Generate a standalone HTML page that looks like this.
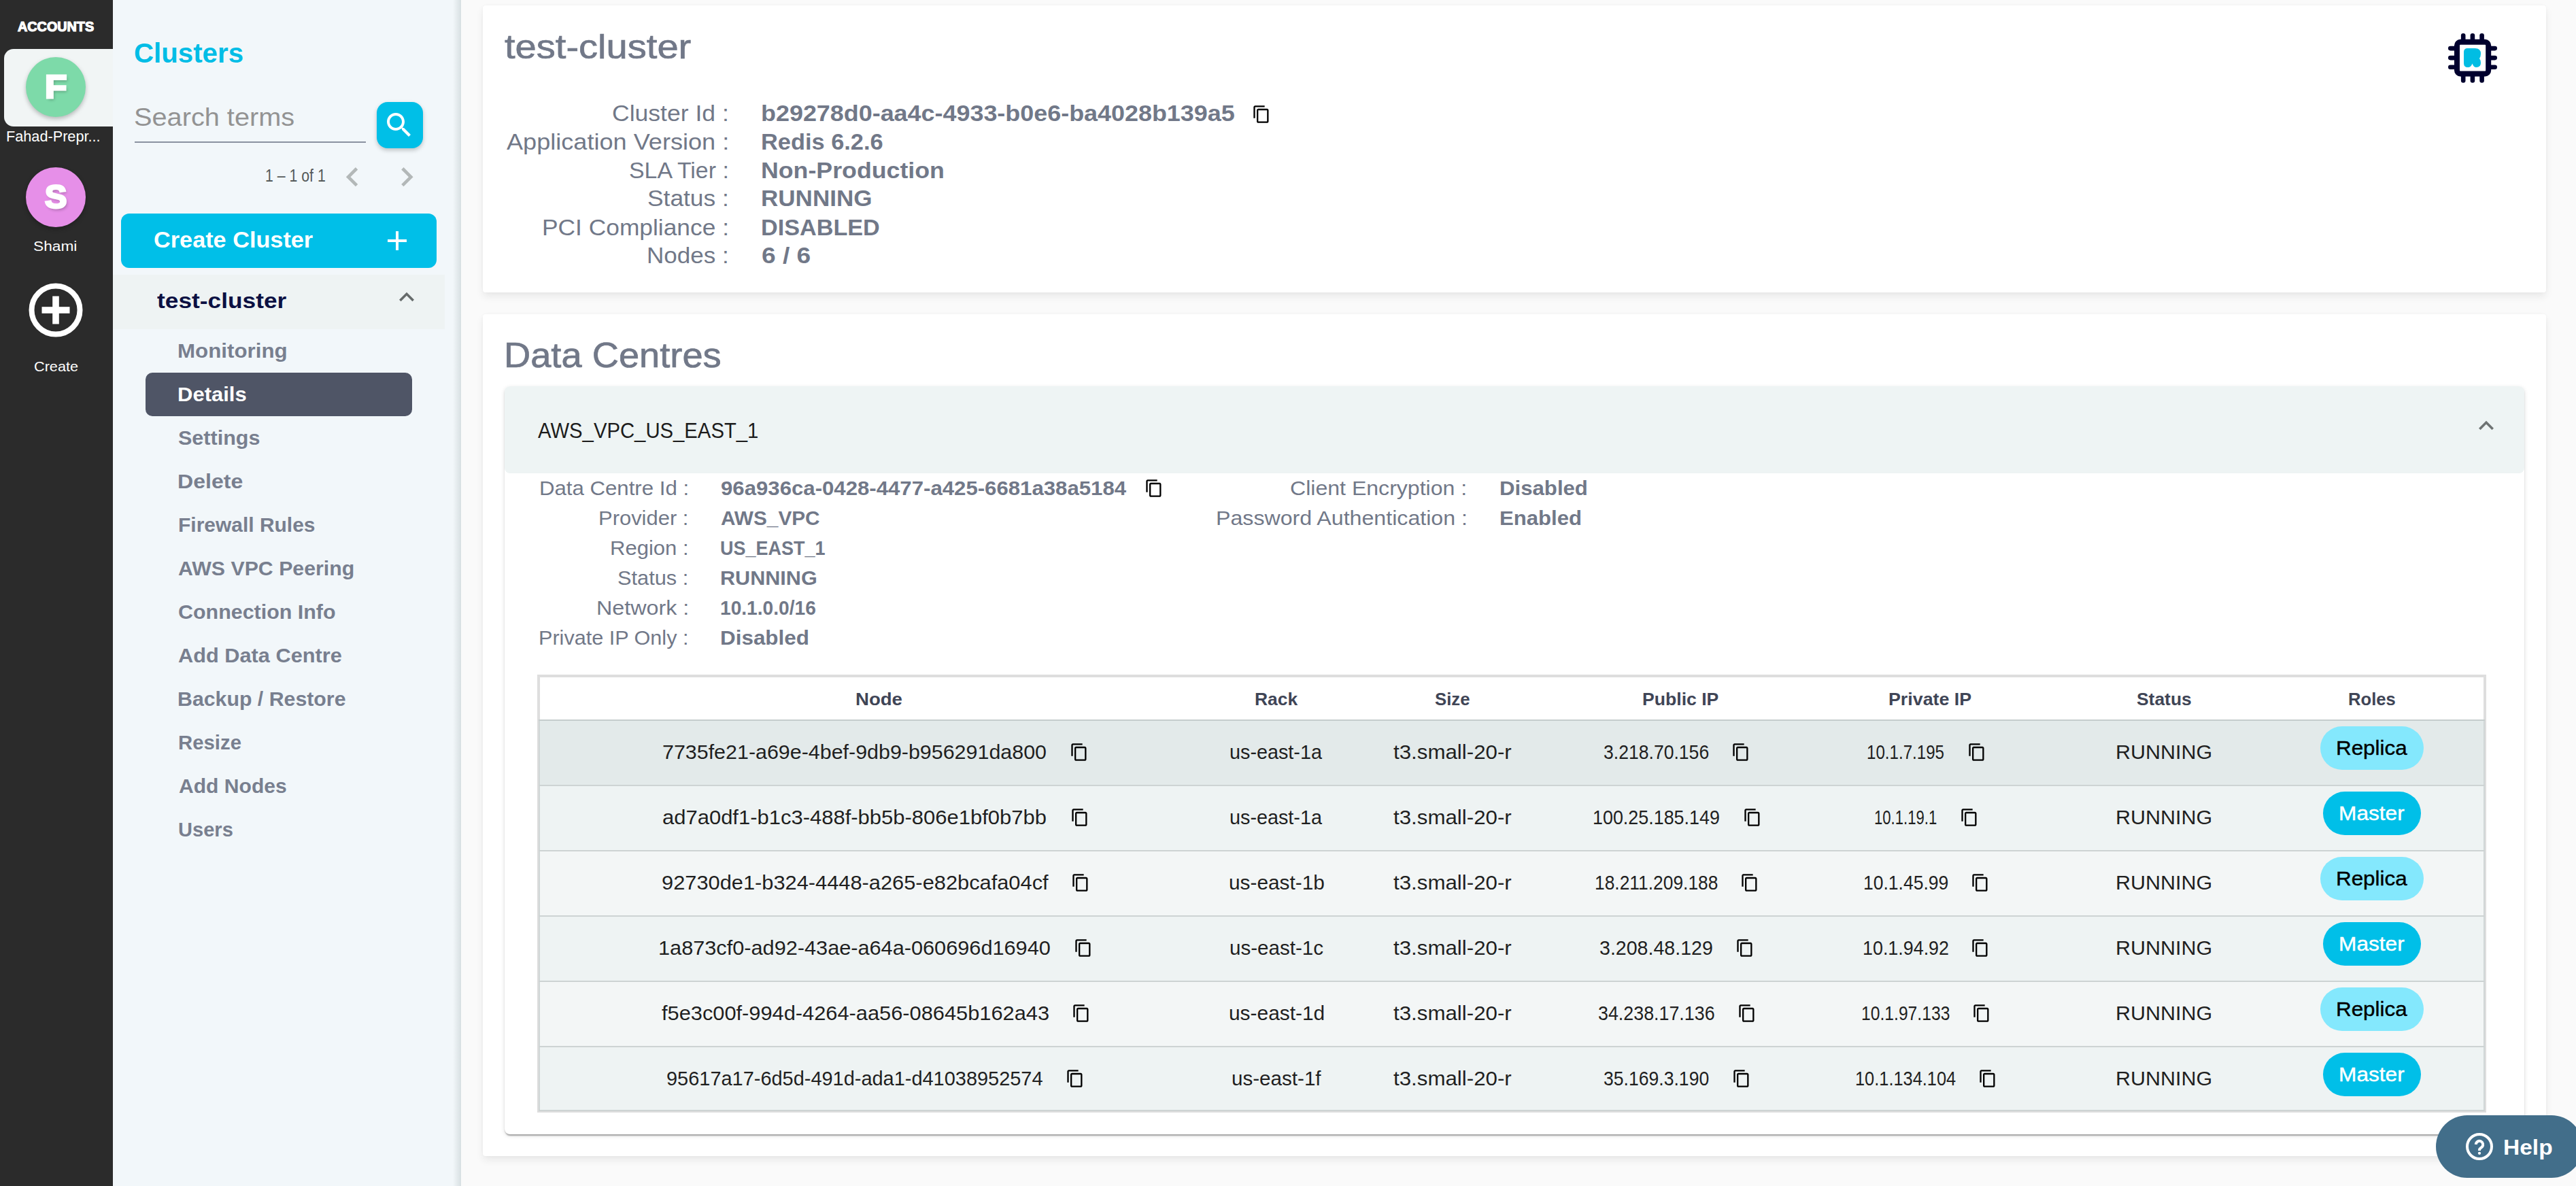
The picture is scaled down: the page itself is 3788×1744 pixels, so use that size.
<!DOCTYPE html><html><head><meta charset="utf-8"><style>
html,body{margin:0;padding:0}
body{width:3788px;height:1744px;overflow:hidden;position:relative;background:#fafafa;font-family:"Liberation Sans",sans-serif}
.bx{position:absolute;box-sizing:border-box}
.ic{position:absolute;display:block}
.t{position:absolute;white-space:nowrap;transform-origin:0 0;font-family:"Liberation Sans",sans-serif}
</style></head><body>
<div class="bx" style="left:0px;top:0px;width:166px;height:1744px;background:#2b2b2b"></div>
<div class="bx" style="left:6px;top:72px;width:160px;height:114px;background:#f1f5f5;border-radius:14px 0 0 14px"></div>
<div class="bx" style="left:38px;top:84px;width:88px;height:88px;background:#7ddaa9;border-radius:50%;box-shadow:0 3px 6px rgba(0,0,0,0.25)"></div>
<div class="bx" style="left:38px;top:246px;width:88px;height:88px;background:#e68fe8;border-radius:50%;box-shadow:0 3px 6px rgba(0,0,0,0.25)"></div>
<svg class="ic" style="left:40px;top:414px;width:84px;height:84px" viewBox="0 0 84 84"><circle cx="42" cy="42" r="35.5" fill="none" stroke="#fff" stroke-width="8"/><rect x="21.5" y="37.2" width="41" height="9.6" fill="#fff"/><rect x="37.2" y="21.5" width="9.6" height="41" fill="#fff"/></svg>
<div class="bx" style="left:166px;top:0px;width:512px;height:1744px;background:#f2f7fa"></div>
<div class="bx" style="left:666px;top:0px;width:12px;height:1744px;background:linear-gradient(to right, rgba(120,140,140,0), rgba(120,140,140,0.22))"></div>
<div class="bx" style="left:198px;top:207.5px;width:340px;height:2px;background:#8a92a0"></div>
<div class="bx" style="left:554px;top:150px;width:68px;height:68px;background:#00bfe7;border-radius:16px;box-shadow:0 3px 6px rgba(0,0,0,0.22)"></div>
<svg class="ic" style="left:563.4px;top:160px;width:48px;height:48px" viewBox="0 0 24 24"><path fill="#fff" d="M15.5 14h-.79l-.28-.27C15.41 12.59 16 11.11 16 9.5 16 5.91 13.09 3 9.5 3S3 5.91 3 9.5 5.91 16 9.5 16c1.61 0 3.09-.59 4.23-1.57l.27.28v.79l5 4.99L20.49 19l-4.99-5zm-6 0C7.01 14 5 11.99 5 9.5S7.01 5 9.5 5 14 7.01 14 9.5 11.99 14 9.5 14z"/></svg>
<svg class="ic" style="left:490.3px;top:232.1px;width:56.4px;height:56.4px" viewBox="0 0 24 24"><path fill="#b3b8b8" d="M15.41 7.41L14 6l-6 6 6 6 1.41-1.41L10.83 12z"/></svg>
<svg class="ic" style="left:570px;top:232.1px;width:56.4px;height:56.4px" viewBox="0 0 24 24"><path fill="#b3b8b8" d="M10 6L8.59 7.41 13.17 12l-4.58 4.59L10 18l6-6z"/></svg>
<div class="bx" style="left:178px;top:314px;width:464px;height:80px;background:#00bfe8;border-radius:12px"></div>
<svg class="ic" style="left:559.5px;top:329.5px;width:48px;height:48px" viewBox="0 0 24 24"><path fill="#fff" d="M19 13h-6v6h-2v-6H5v-2h6V5h2v6h6v2z"/></svg>
<div class="bx" style="left:166px;top:404px;width:488px;height:80px;background:#eef3f3"></div>
<svg class="ic" style="left:576px;top:414.5px;width:44px;height:44px" viewBox="0 0 24 24"><path fill="#666b6b" d="M12 8l-6 6 1.41 1.41L12 10.83l4.59 4.58L18 14z"/></svg>
<div class="bx" style="left:214px;top:548px;width:392px;height:64px;background:#4f5566;border-radius:10px"></div>
<div class="bx" style="left:710px;top:8px;width:3034px;height:422px;background:#fff;border-radius:4px;box-shadow:0 6px 12px rgba(0,0,0,0.07),0 0 4px rgba(0,0,0,0.03)"></div>
<svg class="ic" style="left:1840.67px;top:153.83px;width:28px;height:28px" viewBox="0 0 24 24"><path fill="#000" d="M16 1H4c-1.1 0-2 .9-2 2v14h2V3h12V1zm3 4H8c-1.1 0-2 .9-2 2v14c0 1.1.9 2 2 2h11c1.1 0 2-.9 2-2V7c0-1.1-.9-2-2-2zm0 16H8V7h11v14z"/></svg>
<svg class="ic" style="left:3600px;top:48px;width:73px;height:75px" viewBox="0 0 73 75">
<g stroke="#00002e" stroke-linecap="round" stroke-width="6.6" fill="none">
<line x1="22.2" y1="4.3" x2="22.2" y2="12"/><line x1="35.9" y1="4.3" x2="35.9" y2="12"/><line x1="49.6" y1="4.3" x2="49.6" y2="12"/>
<line x1="22.2" y1="63" x2="22.2" y2="70.5"/><line x1="35.9" y1="63" x2="35.9" y2="70.5"/><line x1="49.6" y1="63" x2="49.6" y2="70.5"/>
<line x1="3.3" y1="23.1" x2="11" y2="23.1"/><line x1="3.3" y1="37.1" x2="11" y2="37.1"/><line x1="3.3" y1="50.8" x2="11" y2="50.8"/>
<line x1="62" y1="23.1" x2="68.7" y2="23.1"/><line x1="62" y1="37.1" x2="68.7" y2="37.1"/><line x1="62" y1="50.8" x2="68.7" y2="50.8"/>
</g>
<rect x="13" y="13.8" width="46.2" height="46.7" rx="5" fill="none" stroke="#00002e" stroke-width="8"/>
<path fill="#00bde3" d="M23 28.5Q23 23 28.5 23L39.5 23Q48 23 48 31Q48 35.5 46 38Q48 40.5 48 44.5Q48 51 41.5 51Q37.5 51 35.5 45.5Q33.5 51 29 51Q23 51 23 45Z"/>
</svg>
<div class="bx" style="left:710px;top:462px;width:3034px;height:1238px;background:#fff;border-radius:4px;box-shadow:0 6px 12px rgba(0,0,0,0.07),0 0 4px rgba(0,0,0,0.03)"></div>
<div class="bx" style="left:742px;top:567.5px;width:2970px;height:1100.5px;background:#fff;border-radius:8px;box-shadow:0 4px 2px -2px rgba(0,0,0,0.2),0 2px 2px 0 rgba(0,0,0,0.14),0 2px 6px 0 rgba(0,0,0,0.12)"></div>
<div class="bx" style="left:742px;top:567.5px;width:2970px;height:128.5px;background:#eef4f4;border-radius:8px"></div>
<svg class="ic" style="left:3633.7px;top:604.1px;width:44px;height:44px" viewBox="0 0 24 24"><path fill="#6e7373" d="M12 8l-6 6 1.41 1.41L12 10.83l4.59 4.58L18 14z"/></svg>
<svg class="ic" style="left:1682.92px;top:703.83px;width:28px;height:28px" viewBox="0 0 24 24"><path fill="#000" d="M16 1H4c-1.1 0-2 .9-2 2v14h2V3h12V1zm3 4H8c-1.1 0-2 .9-2 2v14c0 1.1.9 2 2 2h11c1.1 0 2-.9 2-2V7c0-1.1-.9-2-2-2zm0 16H8V7h11v14z"/></svg>
<div class="bx" style="left:790px;top:992px;width:2866px;height:644px;background:#fff;border-style:solid;border-color:#dedede;border-width:4px 2px 2px 2px"></div>
<div class="bx" style="left:792px;top:996px;width:2862px;height:62px;background:#fff;border-left:2px solid #dedede;border-right:2px solid #dedede"></div>
<div class="bx" style="left:792px;top:1060px;width:2862px;height:94px;background:#e3eaea;border-left:2px solid #d0d6d6;border-right:2px solid #d0d6d6"></div>
<div class="bx" style="left:792px;top:1156px;width:2862px;height:94px;background:#eef3f3;border-left:2px solid #d0d6d6;border-right:2px solid #d0d6d6"></div>
<div class="bx" style="left:792px;top:1252px;width:2862px;height:94px;background:#f3f6f6;border-left:2px solid #d0d6d6;border-right:2px solid #d0d6d6"></div>
<div class="bx" style="left:792px;top:1348px;width:2862px;height:94px;background:#eef3f3;border-left:2px solid #d0d6d6;border-right:2px solid #d0d6d6"></div>
<div class="bx" style="left:792px;top:1444px;width:2862px;height:94px;background:#f3f6f6;border-left:2px solid #d0d6d6;border-right:2px solid #d0d6d6"></div>
<div class="bx" style="left:792px;top:1540px;width:2862px;height:92px;background:#eef3f3;border-left:2px solid #d0d6d6;border-right:2px solid #d0d6d6"></div>
<div class="bx" style="left:792px;top:1058px;width:2862px;height:2px;background:#c5cdcd"></div>
<div class="bx" style="left:792px;top:1154px;width:2862px;height:2px;background:#cdd3d3"></div>
<div class="bx" style="left:792px;top:1250px;width:2862px;height:2px;background:#cdd3d3"></div>
<div class="bx" style="left:792px;top:1346px;width:2862px;height:2px;background:#cdd3d3"></div>
<div class="bx" style="left:792px;top:1442px;width:2862px;height:2px;background:#cdd3d3"></div>
<div class="bx" style="left:792px;top:1538px;width:2862px;height:2px;background:#cdd3d3"></div>
<div class="bx" style="left:792px;top:1632px;width:2862px;height:2px;background:#cdd3d3"></div>
<svg class="ic" style="left:1572.92px;top:1091.83px;width:28px;height:28px" viewBox="0 0 24 24"><path fill="#000" d="M16 1H4c-1.1 0-2 .9-2 2v14h2V3h12V1zm3 4H8c-1.1 0-2 .9-2 2v14c0 1.1.9 2 2 2h11c1.1 0 2-.9 2-2V7c0-1.1-.9-2-2-2zm0 16H8V7h11v14z"/></svg>
<svg class="ic" style="left:2546.42px;top:1091.83px;width:28px;height:28px" viewBox="0 0 24 24"><path fill="#000" d="M16 1H4c-1.1 0-2 .9-2 2v14h2V3h12V1zm3 4H8c-1.1 0-2 .9-2 2v14c0 1.1.9 2 2 2h11c1.1 0 2-.9 2-2V7c0-1.1-.9-2-2-2zm0 16H8V7h11v14z"/></svg>
<svg class="ic" style="left:2892.67px;top:1091.83px;width:28px;height:28px" viewBox="0 0 24 24"><path fill="#000" d="M16 1H4c-1.1 0-2 .9-2 2v14h2V3h12V1zm3 4H8c-1.1 0-2 .9-2 2v14c0 1.1.9 2 2 2h11c1.1 0 2-.9 2-2V7c0-1.1-.9-2-2-2zm0 16H8V7h11v14z"/></svg>
<div class="bx" style="left:3412px;top:1068px;width:152px;height:64px;background:#84e8fd;border-radius:32px"></div>
<svg class="ic" style="left:1573.67px;top:1187.83px;width:28px;height:28px" viewBox="0 0 24 24"><path fill="#000" d="M16 1H4c-1.1 0-2 .9-2 2v14h2V3h12V1zm3 4H8c-1.1 0-2 .9-2 2v14c0 1.1.9 2 2 2h11c1.1 0 2-.9 2-2V7c0-1.1-.9-2-2-2zm0 16H8V7h11v14z"/></svg>
<svg class="ic" style="left:2562.67px;top:1187.83px;width:28px;height:28px" viewBox="0 0 24 24"><path fill="#000" d="M16 1H4c-1.1 0-2 .9-2 2v14h2V3h12V1zm3 4H8c-1.1 0-2 .9-2 2v14c0 1.1.9 2 2 2h11c1.1 0 2-.9 2-2V7c0-1.1-.9-2-2-2zm0 16H8V7h11v14z"/></svg>
<svg class="ic" style="left:2882.17px;top:1187.83px;width:28px;height:28px" viewBox="0 0 24 24"><path fill="#000" d="M16 1H4c-1.1 0-2 .9-2 2v14h2V3h12V1zm3 4H8c-1.1 0-2 .9-2 2v14c0 1.1.9 2 2 2h11c1.1 0 2-.9 2-2V7c0-1.1-.9-2-2-2zm0 16H8V7h11v14z"/></svg>
<div class="bx" style="left:3416px;top:1164px;width:144px;height:64px;background:#00bfe8;border-radius:32px"></div>
<svg class="ic" style="left:1574.97px;top:1283.83px;width:28px;height:28px" viewBox="0 0 24 24"><path fill="#000" d="M16 1H4c-1.1 0-2 .9-2 2v14h2V3h12V1zm3 4H8c-1.1 0-2 .9-2 2v14c0 1.1.9 2 2 2h11c1.1 0 2-.9 2-2V7c0-1.1-.9-2-2-2zm0 16H8V7h11v14z"/></svg>
<svg class="ic" style="left:2558.87px;top:1283.83px;width:28px;height:28px" viewBox="0 0 24 24"><path fill="#000" d="M16 1H4c-1.1 0-2 .9-2 2v14h2V3h12V1zm3 4H8c-1.1 0-2 .9-2 2v14c0 1.1.9 2 2 2h11c1.1 0 2-.9 2-2V7c0-1.1-.9-2-2-2zm0 16H8V7h11v14z"/></svg>
<svg class="ic" style="left:2897.57px;top:1283.83px;width:28px;height:28px" viewBox="0 0 24 24"><path fill="#000" d="M16 1H4c-1.1 0-2 .9-2 2v14h2V3h12V1zm3 4H8c-1.1 0-2 .9-2 2v14c0 1.1.9 2 2 2h11c1.1 0 2-.9 2-2V7c0-1.1-.9-2-2-2zm0 16H8V7h11v14z"/></svg>
<div class="bx" style="left:3412px;top:1260px;width:152px;height:64px;background:#84e8fd;border-radius:32px"></div>
<svg class="ic" style="left:1578.57px;top:1379.83px;width:28px;height:28px" viewBox="0 0 24 24"><path fill="#000" d="M16 1H4c-1.1 0-2 .9-2 2v14h2V3h12V1zm3 4H8c-1.1 0-2 .9-2 2v14c0 1.1.9 2 2 2h11c1.1 0 2-.9 2-2V7c0-1.1-.9-2-2-2zm0 16H8V7h11v14z"/></svg>
<svg class="ic" style="left:2552.47px;top:1379.83px;width:28px;height:28px" viewBox="0 0 24 24"><path fill="#000" d="M16 1H4c-1.1 0-2 .9-2 2v14h2V3h12V1zm3 4H8c-1.1 0-2 .9-2 2v14c0 1.1.9 2 2 2h11c1.1 0 2-.9 2-2V7c0-1.1-.9-2-2-2zm0 16H8V7h11v14z"/></svg>
<svg class="ic" style="left:2898.47px;top:1379.83px;width:28px;height:28px" viewBox="0 0 24 24"><path fill="#000" d="M16 1H4c-1.1 0-2 .9-2 2v14h2V3h12V1zm3 4H8c-1.1 0-2 .9-2 2v14c0 1.1.9 2 2 2h11c1.1 0 2-.9 2-2V7c0-1.1-.9-2-2-2zm0 16H8V7h11v14z"/></svg>
<div class="bx" style="left:3416px;top:1356px;width:144px;height:64px;background:#00bfe8;border-radius:32px"></div>
<svg class="ic" style="left:1575.57px;top:1475.83px;width:28px;height:28px" viewBox="0 0 24 24"><path fill="#000" d="M16 1H4c-1.1 0-2 .9-2 2v14h2V3h12V1zm3 4H8c-1.1 0-2 .9-2 2v14c0 1.1.9 2 2 2h11c1.1 0 2-.9 2-2V7c0-1.1-.9-2-2-2zm0 16H8V7h11v14z"/></svg>
<svg class="ic" style="left:2554.87px;top:1475.83px;width:28px;height:28px" viewBox="0 0 24 24"><path fill="#000" d="M16 1H4c-1.1 0-2 .9-2 2v14h2V3h12V1zm3 4H8c-1.1 0-2 .9-2 2v14c0 1.1.9 2 2 2h11c1.1 0 2-.9 2-2V7c0-1.1-.9-2-2-2zm0 16H8V7h11v14z"/></svg>
<svg class="ic" style="left:2899.97px;top:1475.83px;width:28px;height:28px" viewBox="0 0 24 24"><path fill="#000" d="M16 1H4c-1.1 0-2 .9-2 2v14h2V3h12V1zm3 4H8c-1.1 0-2 .9-2 2v14c0 1.1.9 2 2 2h11c1.1 0 2-.9 2-2V7c0-1.1-.9-2-2-2zm0 16H8V7h11v14z"/></svg>
<div class="bx" style="left:3412px;top:1452px;width:152px;height:64px;background:#84e8fd;border-radius:32px"></div>
<svg class="ic" style="left:1567.07px;top:1571.83px;width:28px;height:28px" viewBox="0 0 24 24"><path fill="#000" d="M16 1H4c-1.1 0-2 .9-2 2v14h2V3h12V1zm3 4H8c-1.1 0-2 .9-2 2v14c0 1.1.9 2 2 2h11c1.1 0 2-.9 2-2V7c0-1.1-.9-2-2-2zm0 16H8V7h11v14z"/></svg>
<svg class="ic" style="left:2546.67px;top:1571.83px;width:28px;height:28px" viewBox="0 0 24 24"><path fill="#000" d="M16 1H4c-1.1 0-2 .9-2 2v14h2V3h12V1zm3 4H8c-1.1 0-2 .9-2 2v14c0 1.1.9 2 2 2h11c1.1 0 2-.9 2-2V7c0-1.1-.9-2-2-2zm0 16H8V7h11v14z"/></svg>
<svg class="ic" style="left:2909.07px;top:1571.83px;width:28px;height:28px" viewBox="0 0 24 24"><path fill="#000" d="M16 1H4c-1.1 0-2 .9-2 2v14h2V3h12V1zm3 4H8c-1.1 0-2 .9-2 2v14c0 1.1.9 2 2 2h11c1.1 0 2-.9 2-2V7c0-1.1-.9-2-2-2zm0 16H8V7h11v14z"/></svg>
<div class="bx" style="left:3416px;top:1548px;width:144px;height:64px;background:#00bfe8;border-radius:32px"></div>
<div class="bx" style="left:3582px;top:1640px;width:216px;height:92px;background:#426e8a;border-radius:46px"></div>
<svg class="ic" style="left:3622px;top:1662px;width:48px;height:48px" viewBox="0 0 24 24"><circle cx="12" cy="12" r="9" fill="none" stroke="#fff" stroke-width="2"/><path d="M9.4 10.45A2.6 2.6 0 1 1 14.0 12.2L12.9 13.1Q12 13.8 12 14.6L12 15" fill="none" stroke="#fff" stroke-width="2"/><circle cx="12" cy="16.9" r="1.08" fill="#fff"/></svg>
<div class="t" style="left:26px;top:28.57px;font-size:20.5px;line-height:20.5px;font-weight:900;color:#ffffff;transform:scaleX(0.9655);-webkit-text-stroke:1.2px #fff;">ACCOUNTS</div>
<div class="t" style="left:9.03px;top:190.05px;font-size:22px;line-height:22px;font-weight:400;color:#ffffff;transform:scaleX(0.9854);">Fahad-Prepr...</div>
<div class="t" style="left:49.49px;top:352.18px;font-size:20.5px;line-height:20.5px;font-weight:400;color:#ffffff;transform:scaleX(1.1071);">Shami</div>
<div class="t" style="left:49.57px;top:528.35px;font-size:21px;line-height:21px;font-weight:400;color:#ffffff;transform:scaleX(1.0311);">Create</div>
<div class="t" style="left:65.81px;top:103.28px;font-size:48.5px;line-height:48.5px;font-weight:900;color:#ffffff;transform:scaleX(1.0926);-webkit-text-stroke:3px #fff;text-shadow:2px 3px 4px rgba(0,0,0,0.25);">F</div>
<div class="t" style="left:66px;top:265.27px;font-size:48.5px;line-height:48.5px;font-weight:900;color:#ffffff;transform:scaleX(1.0000);-webkit-text-stroke:3px #fff;text-shadow:2px 3px 4px rgba(0,0,0,0.25);">S</div>
<div class="t" style="left:197.01px;top:57.58px;font-size:40.5px;line-height:40.5px;font-weight:700;color:#00bde6;transform:scaleX(0.9937);">Clusters</div>
<div class="t" style="left:196.88px;top:154.12px;font-size:37.5px;line-height:37.5px;font-weight:400;color:#939393;transform:scaleX(1.0591);">Search terms</div>
<div class="t" style="left:390.36px;top:244.9px;font-size:26px;line-height:26px;font-weight:400;color:#555a5a;transform:scaleX(0.8190);">1 – 1 of 1</div>
<div class="t" style="left:225.99px;top:334.6px;font-size:34px;line-height:34px;font-weight:700;color:#ffffff;transform:scaleX(1.0076);">Create Cluster</div>
<div class="t" style="left:230.5px;top:427.23px;font-size:31.5px;line-height:31.5px;font-weight:700;color:#0b1042;transform:scaleX(1.1206);">test-cluster</div>
<div class="t" style="left:261.41px;top:500.5px;font-size:30px;line-height:30px;font-weight:700;color:#787f8f;transform:scaleX(1.0430);">Monitoring</div>
<div class="t" style="left:261.43px;top:564.5px;font-size:30px;line-height:30px;font-weight:700;color:#ffffff;transform:scaleX(1.0342);">Details</div>
<div class="t" style="left:262.48px;top:628.5px;font-size:30px;line-height:30px;font-weight:700;color:#787f8f;transform:scaleX(1.0172);">Settings</div>
<div class="t" style="left:261.36px;top:692.5px;font-size:30px;line-height:30px;font-weight:700;color:#787f8f;transform:scaleX(1.0690);">Delete</div>
<div class="t" style="left:261.5px;top:756.5px;font-size:30px;line-height:30px;font-weight:700;color:#787f8f;transform:scaleX(0.9987);">Firewall Rules</div>
<div class="t" style="left:262.49px;top:820.5px;font-size:30px;line-height:30px;font-weight:700;color:#787f8f;transform:scaleX(1.0098);">AWS VPC Peering</div>
<div class="t" style="left:262.49px;top:884.5px;font-size:30px;line-height:30px;font-weight:700;color:#787f8f;transform:scaleX(1.0142);">Connection Info</div>
<div class="t" style="left:262.48px;top:948.5px;font-size:30px;line-height:30px;font-weight:700;color:#787f8f;transform:scaleX(1.0245);">Add Data Centre</div>
<div class="t" style="left:261.48px;top:1012.5px;font-size:30px;line-height:30px;font-weight:700;color:#787f8f;transform:scaleX(1.0099);">Backup / Restore</div>
<div class="t" style="left:261.54px;top:1076.5px;font-size:30px;line-height:30px;font-weight:700;color:#787f8f;transform:scaleX(0.9783);">Resize</div>
<div class="t" style="left:262.5px;top:1140.5px;font-size:30px;line-height:30px;font-weight:700;color:#787f8f;transform:scaleX(1.0026);">Add Nodes</div>
<div class="t" style="left:261.56px;top:1204.5px;font-size:30px;line-height:30px;font-weight:700;color:#787f8f;transform:scaleX(0.9688);">Users</div>
<div class="t" style="left:742.3px;top:43.75px;font-size:50px;line-height:50px;font-weight:400;color:#717888;transform:scaleX(1.1217);-webkit-text-stroke:0.7px #717888;">test-cluster</div>
<div class="t" style="left:900.38px;top:150.28px;font-size:33.5px;line-height:33.5px;font-weight:400;color:#717888;transform:scaleX(1.0605);">Cluster Id :</div>
<div class="t" style="left:744.5px;top:192.03px;font-size:33.5px;line-height:33.5px;font-weight:400;color:#717888;transform:scaleX(1.0781);">Application Version :</div>
<div class="t" style="left:925.48px;top:234.03px;font-size:33.5px;line-height:33.5px;font-weight:400;color:#717888;transform:scaleX(1.0107);">SLA Tier :</div>
<div class="t" style="left:951.89px;top:275.27px;font-size:33.5px;line-height:33.5px;font-weight:400;color:#717888;transform:scaleX(1.0550);">Status :</div>
<div class="t" style="left:796.84px;top:317.52px;font-size:33.5px;line-height:33.5px;font-weight:400;color:#717888;transform:scaleX(1.0549);">PCI Compliance :</div>
<div class="t" style="left:950.86px;top:359.02px;font-size:33.5px;line-height:33.5px;font-weight:400;color:#717888;transform:scaleX(1.0455);">Nodes :</div>
<div class="t" style="left:1118.86px;top:150.28px;font-size:33.5px;line-height:33.5px;font-weight:700;color:#717888;transform:scaleX(1.0719);">b29278d0-aa4c-4933-b0e6-ba4028b139a5</div>
<div class="t" style="left:1118.95px;top:192.03px;font-size:33.5px;line-height:33.5px;font-weight:700;color:#717888;transform:scaleX(1.0262);">Redis 6.2.6</div>
<div class="t" style="left:1118.87px;top:234.03px;font-size:33.5px;line-height:33.5px;font-weight:700;color:#717888;transform:scaleX(1.0663);">Non-Production</div>
<div class="t" style="left:1118.91px;top:275.27px;font-size:33.5px;line-height:33.5px;font-weight:700;color:#717888;transform:scaleX(1.0461);">RUNNING</div>
<div class="t" style="left:1118.96px;top:317.52px;font-size:33.5px;line-height:33.5px;font-weight:700;color:#717888;transform:scaleX(1.0208);">DISABLED</div>
<div class="t" style="left:1119.89px;top:359.02px;font-size:33.5px;line-height:33.5px;font-weight:700;color:#717888;transform:scaleX(1.1071);">6 / 6</div>
<div class="t" style="left:741.29px;top:496.73px;font-size:51.5px;line-height:51.5px;font-weight:400;color:#717888;transform:scaleX(1.0537);-webkit-text-stroke:0.7px #717888;">Data Centres</div>
<div class="t" style="left:790.75px;top:617.3px;font-size:32px;line-height:32px;font-weight:400;color:#1c1c1c;transform:scaleX(0.9150);">AWS_VPC_US_EAST_1</div>
<div class="t" style="left:792.85px;top:704.35px;font-size:29px;line-height:29px;font-weight:400;color:#717888;transform:scaleX(1.0750);">Data Centre Id :</div>
<div class="t" style="left:879.87px;top:748.35px;font-size:29px;line-height:29px;font-weight:400;color:#717888;transform:scaleX(1.0667);">Provider :</div>
<div class="t" style="left:896.61px;top:792.35px;font-size:29px;line-height:29px;font-weight:400;color:#717888;transform:scaleX(1.0697);">Region :</div>
<div class="t" style="left:908.19px;top:836.35px;font-size:29px;line-height:29px;font-weight:400;color:#717888;transform:scaleX(1.0605);">Status :</div>
<div class="t" style="left:876.53px;top:879.85px;font-size:29px;line-height:29px;font-weight:400;color:#717888;transform:scaleX(1.1123);">Network :</div>
<div class="t" style="left:791.64px;top:923.85px;font-size:29px;line-height:29px;font-weight:400;color:#717888;transform:scaleX(1.0549);">Private IP Only :</div>
<div class="t" style="left:1060.18px;top:704.35px;font-size:29px;line-height:29px;font-weight:700;color:#717888;transform:scaleX(1.0745);">96a936ca-0428-4477-a425-6681a38a5184</div>
<div class="t" style="left:1060.22px;top:748.35px;font-size:29px;line-height:29px;font-weight:700;color:#717888;transform:scaleX(1.0268);">AWS_VPC</div>
<div class="t" style="left:1059.39px;top:792.35px;font-size:29px;line-height:29px;font-weight:700;color:#717888;transform:scaleX(0.9299);">US_EAST_1</div>
<div class="t" style="left:1059.14px;top:836.35px;font-size:29px;line-height:29px;font-weight:700;color:#717888;transform:scaleX(1.0549);">RUNNING</div>
<div class="t" style="left:1059.31px;top:879.85px;font-size:29px;line-height:29px;font-weight:700;color:#717888;transform:scaleX(0.9701);">10.1.0.0/16</div>
<div class="t" style="left:1059.08px;top:923.85px;font-size:29px;line-height:29px;font-weight:700;color:#717888;transform:scaleX(1.0833);">Disabled</div>
<div class="t" style="left:1897.39px;top:704.35px;font-size:29px;line-height:29px;font-weight:400;color:#717888;transform:scaleX(1.1056);">Client Encryption :</div>
<div class="t" style="left:1788.03px;top:748.35px;font-size:29px;line-height:29px;font-weight:400;color:#717888;transform:scaleX(1.1087);">Password Authentication :</div>
<div class="t" style="left:2205.1px;top:704.35px;font-size:29px;line-height:29px;font-weight:700;color:#717888;transform:scaleX(1.0748);">Disabled</div>
<div class="t" style="left:2205.1px;top:748.35px;font-size:29px;line-height:29px;font-weight:700;color:#717888;transform:scaleX(1.0734);">Enabled</div>
<div class="t" style="left:1258.38px;top:1014.9px;font-size:26px;line-height:26px;font-weight:700;color:#3f4556;transform:scaleX(1.0605);">Node</div>
<div class="t" style="left:1845.22px;top:1014.9px;font-size:26px;line-height:26px;font-weight:700;color:#3f4556;transform:scaleX(1.0167);">Rack</div>
<div class="t" style="left:2109.51px;top:1014.9px;font-size:26px;line-height:26px;font-weight:700;color:#3f4556;transform:scaleX(0.9900);">Size</div>
<div class="t" style="left:2415.2px;top:1014.9px;font-size:26px;line-height:26px;font-weight:700;color:#3f4556;transform:scaleX(1.0234);">Public IP</div>
<div class="t" style="left:2776.69px;top:1014.9px;font-size:26px;line-height:26px;font-weight:700;color:#3f4556;transform:scaleX(1.0302);">Private IP</div>
<div class="t" style="left:3141.73px;top:1014.9px;font-size:26px;line-height:26px;font-weight:700;color:#3f4556;transform:scaleX(1.0160);">Status</div>
<div class="t" style="left:3453.03px;top:1014.9px;font-size:26px;line-height:26px;font-weight:700;color:#3f4556;transform:scaleX(0.9853);">Roles</div>
<div class="t" style="left:974.49px;top:1090.5px;font-size:30px;line-height:30px;font-weight:400;color:#1f1f1f;transform:scaleX(1.0140);">7735fe21-a69e-4bef-9db9-b956291da800</div>
<div class="t" style="left:1808.33px;top:1090.5px;font-size:30px;line-height:30px;font-weight:400;color:#1f1f1f;transform:scaleX(0.9589);">us-east-1a</div>
<div class="t" style="left:2358.36px;top:1090.5px;font-size:30px;line-height:30px;font-weight:400;color:#1f1f1f;transform:scaleX(0.8858);">3.218.70.156</div>
<div class="t" style="left:2744.89px;top:1090.5px;font-size:30px;line-height:30px;font-weight:400;color:#1f1f1f;transform:scaleX(0.8040);">10.1.7.195</div>
<div class="t" style="left:2048.75px;top:1090.5px;font-size:30px;line-height:30px;font-weight:400;color:#1f1f1f;transform:scaleX(1.0422);">t3.small-20-r</div>
<div class="t" style="left:3111.47px;top:1090.5px;font-size:30px;line-height:30px;font-weight:400;color:#1f1f1f;transform:scaleX(1.0147);">RUNNING</div>
<div class="t" style="left:3434.84px;top:1086.35px;font-size:29px;line-height:29px;font-weight:400;color:#000000;transform:scaleX(1.0816);-webkit-text-stroke:0.4px #000;">Replica</div>
<div class="t" style="left:974.47px;top:1186.5px;font-size:30px;line-height:30px;font-weight:400;color:#1f1f1f;transform:scaleX(1.0326);">ad7a0df1-b1c3-488f-bb5b-806e1bf0b7bb</div>
<div class="t" style="left:1808.33px;top:1186.5px;font-size:30px;line-height:30px;font-weight:400;color:#1f1f1f;transform:scaleX(0.9589);">us-east-1a</div>
<div class="t" style="left:2341.96px;top:1186.5px;font-size:30px;line-height:30px;font-weight:400;color:#1f1f1f;transform:scaleX(0.8963);">100.25.185.149</div>
<div class="t" style="left:2755.52px;top:1186.5px;font-size:30px;line-height:30px;font-weight:400;color:#1f1f1f;transform:scaleX(0.7377);">10.1.19.1</div>
<div class="t" style="left:2048.75px;top:1186.5px;font-size:30px;line-height:30px;font-weight:400;color:#1f1f1f;transform:scaleX(1.0422);">t3.small-20-r</div>
<div class="t" style="left:3111.47px;top:1186.5px;font-size:30px;line-height:30px;font-weight:400;color:#1f1f1f;transform:scaleX(1.0147);">RUNNING</div>
<div class="t" style="left:3438.82px;top:1182.35px;font-size:29px;line-height:29px;font-weight:400;color:#ffffff;transform:scaleX(1.0920);-webkit-text-stroke:0.4px #fff;">Master</div>
<div class="t" style="left:972.72px;top:1282.5px;font-size:30px;line-height:30px;font-weight:400;color:#1f1f1f;transform:scaleX(1.0267);">92730de1-b324-4448-a265-e82bcafa04cf</div>
<div class="t" style="left:1806.51px;top:1282.5px;font-size:30px;line-height:30px;font-weight:400;color:#1f1f1f;transform:scaleX(0.9935);">us-east-1b</div>
<div class="t" style="left:2344.54px;top:1282.5px;font-size:30px;line-height:30px;font-weight:400;color:#1f1f1f;transform:scaleX(0.8793);">18.211.209.188</div>
<div class="t" style="left:2739.73px;top:1282.5px;font-size:30px;line-height:30px;font-weight:400;color:#1f1f1f;transform:scaleX(0.8841);">10.1.45.99</div>
<div class="t" style="left:2048.75px;top:1282.5px;font-size:30px;line-height:30px;font-weight:400;color:#1f1f1f;transform:scaleX(1.0422);">t3.small-20-r</div>
<div class="t" style="left:3111.47px;top:1282.5px;font-size:30px;line-height:30px;font-weight:400;color:#1f1f1f;transform:scaleX(1.0147);">RUNNING</div>
<div class="t" style="left:3434.84px;top:1278.35px;font-size:29px;line-height:29px;font-weight:400;color:#000000;transform:scaleX(1.0816);-webkit-text-stroke:0.4px #000;">Replica</div>
<div class="t" style="left:967.95px;top:1378.5px;font-size:30px;line-height:30px;font-weight:400;color:#1f1f1f;transform:scaleX(1.0230);">1a873cf0-ad92-43ae-a64a-060696d16940</div>
<div class="t" style="left:1808.03px;top:1378.5px;font-size:30px;line-height:30px;font-weight:400;color:#1f1f1f;transform:scaleX(0.9854);">us-east-1c</div>
<div class="t" style="left:2352.05px;top:1378.5px;font-size:30px;line-height:30px;font-weight:400;color:#1f1f1f;transform:scaleX(0.9526);">3.208.48.129</div>
<div class="t" style="left:2739.01px;top:1378.5px;font-size:30px;line-height:30px;font-weight:400;color:#1f1f1f;transform:scaleX(0.8957);">10.1.94.92</div>
<div class="t" style="left:2048.75px;top:1378.5px;font-size:30px;line-height:30px;font-weight:400;color:#1f1f1f;transform:scaleX(1.0422);">t3.small-20-r</div>
<div class="t" style="left:3111.47px;top:1378.5px;font-size:30px;line-height:30px;font-weight:400;color:#1f1f1f;transform:scaleX(1.0147);">RUNNING</div>
<div class="t" style="left:3438.82px;top:1374.35px;font-size:29px;line-height:29px;font-weight:400;color:#ffffff;transform:scaleX(1.0920);-webkit-text-stroke:0.4px #fff;">Master</div>
<div class="t" style="left:973px;top:1474.5px;font-size:30px;line-height:30px;font-weight:400;color:#1f1f1f;transform:scaleX(1.0262);">f5e3c00f-994d-4264-aa56-08645b162a43</div>
<div class="t" style="left:1806.51px;top:1474.5px;font-size:30px;line-height:30px;font-weight:400;color:#1f1f1f;transform:scaleX(0.9964);">us-east-1d</div>
<div class="t" style="left:2350.01px;top:1474.5px;font-size:30px;line-height:30px;font-weight:400;color:#1f1f1f;transform:scaleX(0.8942);">34.238.17.136</div>
<div class="t" style="left:2736.75px;top:1474.5px;font-size:30px;line-height:30px;font-weight:400;color:#1f1f1f;transform:scaleX(0.8226);">10.1.97.133</div>
<div class="t" style="left:2048.75px;top:1474.5px;font-size:30px;line-height:30px;font-weight:400;color:#1f1f1f;transform:scaleX(1.0422);">t3.small-20-r</div>
<div class="t" style="left:3111.47px;top:1474.5px;font-size:30px;line-height:30px;font-weight:400;color:#1f1f1f;transform:scaleX(1.0147);">RUNNING</div>
<div class="t" style="left:3434.84px;top:1470.35px;font-size:29px;line-height:29px;font-weight:400;color:#000000;transform:scaleX(1.0816);-webkit-text-stroke:0.4px #000;">Replica</div>
<div class="t" style="left:980.29px;top:1570.5px;font-size:30px;line-height:30px;font-weight:400;color:#1f1f1f;transform:scaleX(0.9646);">95617a17-6d5d-491d-ada1-d41038952574</div>
<div class="t" style="left:1811.43px;top:1570.5px;font-size:30px;line-height:30px;font-weight:400;color:#1f1f1f;transform:scaleX(0.9864);">us-east-1f</div>
<div class="t" style="left:2358.11px;top:1570.5px;font-size:30px;line-height:30px;font-weight:400;color:#1f1f1f;transform:scaleX(0.8861);">35.169.3.190</div>
<div class="t" style="left:2727.61px;top:1570.5px;font-size:30px;line-height:30px;font-weight:400;color:#1f1f1f;transform:scaleX(0.8457);">10.1.134.104</div>
<div class="t" style="left:2048.75px;top:1570.5px;font-size:30px;line-height:30px;font-weight:400;color:#1f1f1f;transform:scaleX(1.0422);">t3.small-20-r</div>
<div class="t" style="left:3111.47px;top:1570.5px;font-size:30px;line-height:30px;font-weight:400;color:#1f1f1f;transform:scaleX(1.0147);">RUNNING</div>
<div class="t" style="left:3438.82px;top:1566.35px;font-size:29px;line-height:29px;font-weight:400;color:#ffffff;transform:scaleX(1.0920);-webkit-text-stroke:0.4px #fff;">Master</div>
<div class="t" style="left:3680.67px;top:1672.22px;font-size:31.5px;line-height:31.5px;font-weight:700;color:#ffffff;transform:scaleX(1.0646);">Help</div>
</body></html>
